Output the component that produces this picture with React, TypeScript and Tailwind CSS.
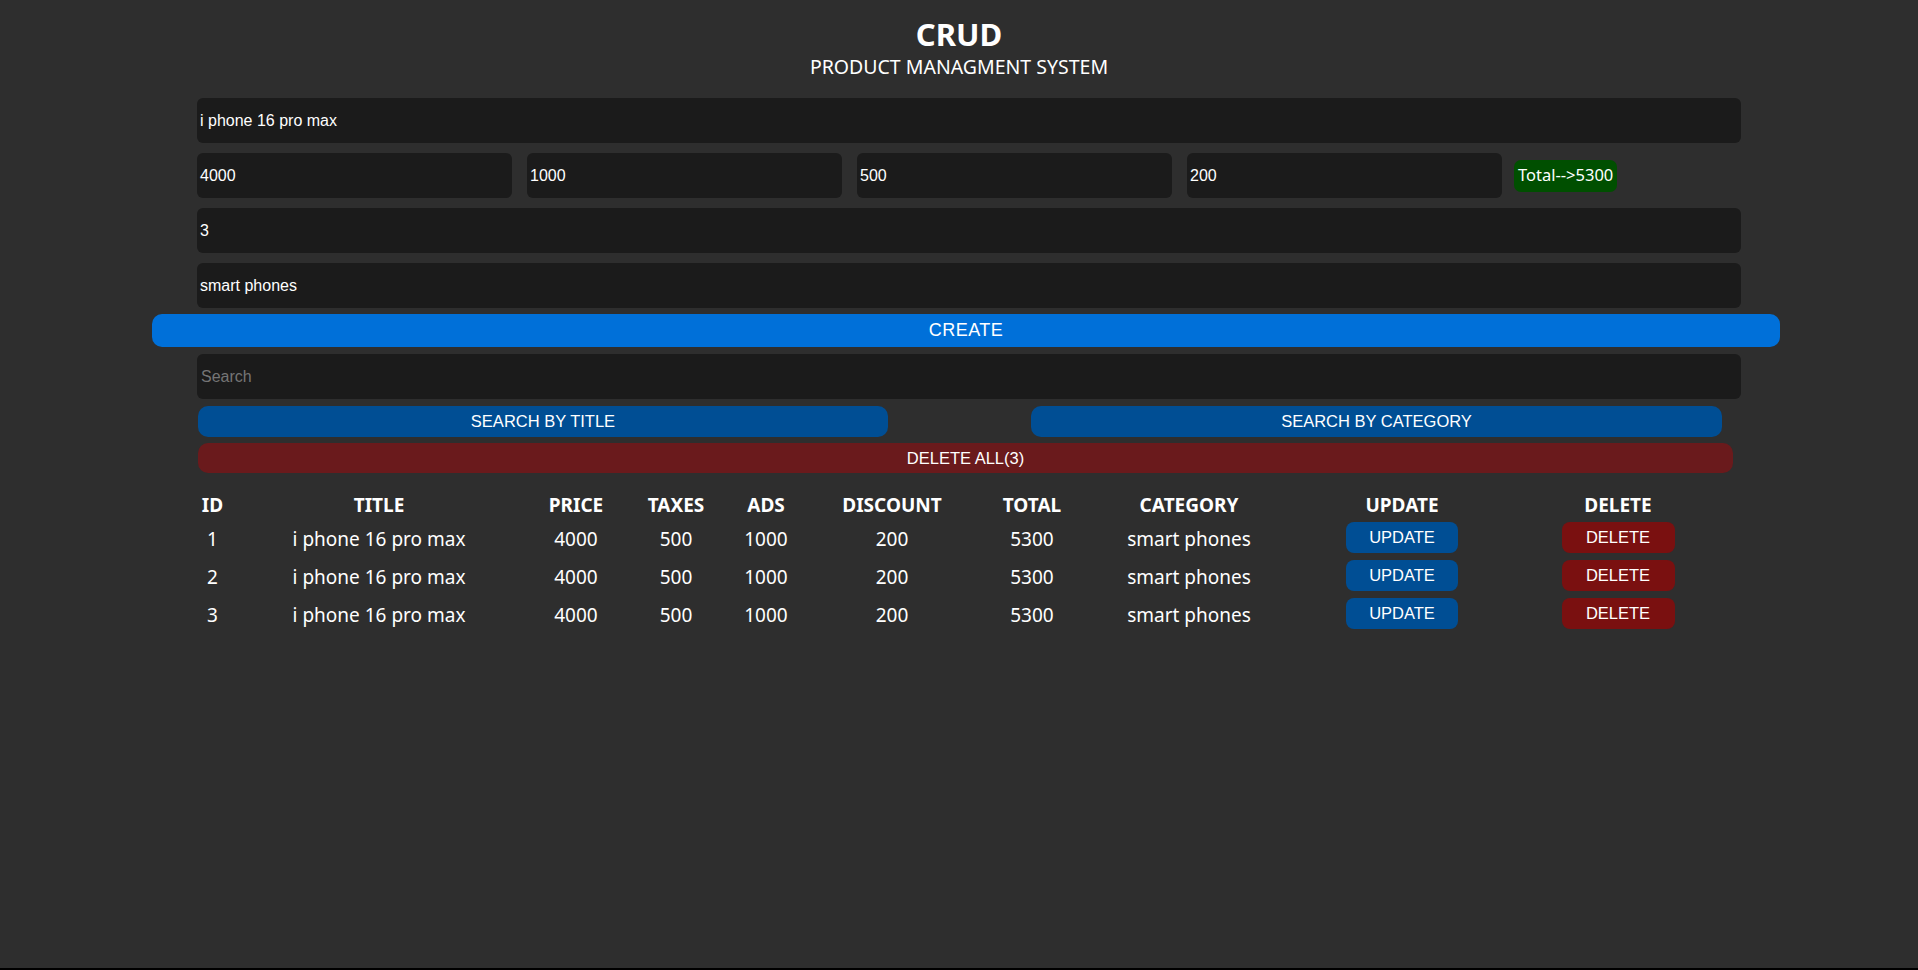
import React from "react";

const seg = { fontFamily: '"Noto Sans", "Open Sans", sans-serif' };
const arial = { fontFamily: '"Liberation Sans", Arial, sans-serif' };

const cols = [
  { h: "ID", w: "w-[31px]" },
  { h: "TITLE", w: "w-[302px]" },
  { h: "PRICE", w: "w-[92px]" },
  { h: "TAXES", w: "w-[108px]" },
  { h: "ADS", w: "w-[72px]" },
  { h: "DISCOUNT", w: "w-[180px]" },
  { h: "TOTAL", w: "w-[100px]" },
  { h: "CATEGORY", w: "w-[214px]" },
  { h: "UPDATE", w: "w-[212px]" },
  { h: "DELETE", w: "w-[220px]" },
];

function Field({ value, className = "" }: { value: string; className?: string }) {
  return (
    <div
      className={`h-[45px] bg-[#1b1b1b] rounded-[6px] flex items-center pl-[3px] text-[16px] text-white ${className}`}
      style={arial}
    >
      {value}
    </div>
  );
}

export default function App() {
  const rows = [1, 2, 3];
  return (
    <div className="w-[1918px] h-[970px] bg-[#2e2e2e] flex flex-col overflow-hidden">
      <div className="flex-1 flex flex-col">
        <div className="flex flex-col items-center text-white pt-[15px]" style={seg}>
          <div className="text-[31px] font-bold leading-[38px]">CRUD</div>
          <div className="text-[19.5px] leading-[26px] mt-[1px]">PRODUCT MANAGMENT SYSTEM</div>
        </div>

        <div className="ml-[197px] w-[1544px] mt-[18px] flex flex-col gap-[10px]">
          <Field value="i phone 16 pro max" />
          <div className="flex items-center gap-[15px]">
            <Field value="4000" className="w-[315px]" />
            <Field value="1000" className="w-[315px]" />
            <Field value="500" className="w-[315px]" />
            <Field value="200" className="w-[315px]" />
            <div
              className="ml-[-3px] h-[32px] px-[4px] flex items-center bg-[#004f00] rounded-[7px] text-white text-[16.5px]"
              style={seg}
            >
              Total--&gt;5300
            </div>
          </div>
          <Field value="3" />
          <Field value="smart phones" />
        </div>

        <button
          className="ml-[152px] w-[1628px] h-[33px] mt-[6px] bg-[#0070d9] rounded-[10px] text-white text-[18px] tracking-[0.5px]"
          style={arial}
        >
          CREATE
        </button>

        <div className="ml-[197px] w-[1544px] mt-[7px]">
          <div
            className="h-[45px] bg-[#1b1b1b] rounded-[6px] flex items-center pl-[4px] text-[16px] text-[#757575]"
            style={arial}
          >
            Search
          </div>
        </div>

        <div className="ml-[198px] mt-[7px] flex gap-[143px] text-white text-[16.5px]" style={arial}>
          <button className="w-[690px] h-[31px] bg-[#004e94] rounded-[10px]">SEARCH BY TITLE</button>
          <button className="w-[691px] h-[31px] bg-[#004e94] rounded-[10px]">SEARCH BY CATEGORY</button>
        </div>
        <button
          className="ml-[198px] mt-[6px] w-[1535px] h-[30px] bg-[#6a1a1c] rounded-[10px] text-white text-[16.5px]"
          style={arial}
        >
          DELETE ALL(3)
        </button>

        <div className="ml-[197px] mt-[17px] text-white" style={seg}>
          <div className="flex h-[30px] items-center">
            {cols.map((c) => (
              <div key={c.h} className={`${c.w} text-center text-[19px] font-bold whitespace-nowrap`}>
                {c.h}
              </div>
            ))}
          </div>
          {rows.map((r) => (
            <div key={r} className="flex h-[38px] items-center text-[19px] whitespace-nowrap">
              <div className="w-[31px] text-center">{r}</div>
              <div className="w-[302px] text-center">i phone 16 pro max</div>
              <div className="w-[92px] text-center">4000</div>
              <div className="w-[108px] text-center">500</div>
              <div className="w-[72px] text-center">1000</div>
              <div className="w-[180px] text-center">200</div>
              <div className="w-[100px] text-center">5300</div>
              <div className="w-[214px] text-center">smart phones</div>
              <div className="w-[212px] flex justify-center">
                <button
                  className="w-[112px] h-[31px] mb-[4px] bg-[#004e94] rounded-[8px] text-[16.5px] text-white"
                  style={arial}
                >
                  UPDATE
                </button>
              </div>
              <div className="w-[220px] flex justify-center">
                <button
                  className="w-[113px] h-[31px] mb-[4px] bg-[#7a1010] rounded-[8px] text-[16.5px] text-white"
                  style={arial}
                >
                  DELETE
                </button>
              </div>
            </div>
          ))}
        </div>
      </div>
      <div className="h-[2px] bg-black" />
    </div>
  );
}
